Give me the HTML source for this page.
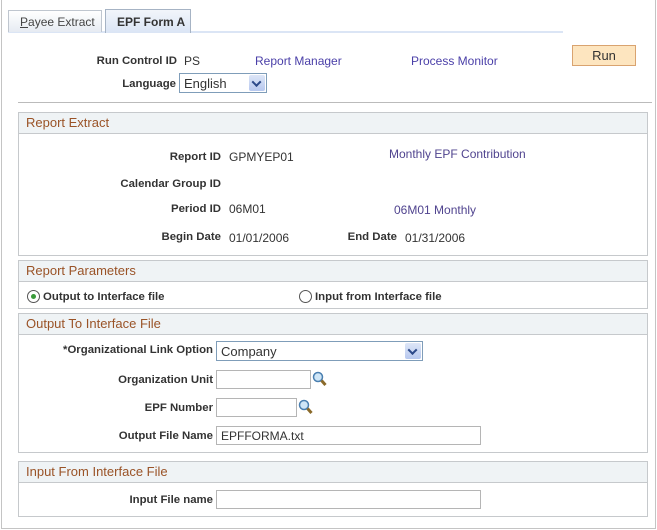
<!DOCTYPE html>
<html><head><meta charset="utf-8"><style>
*{margin:0;padding:0;box-sizing:border-box}
body{width:657px;height:530px;background:#fff;font-family:"Liberation Sans",Arial,sans-serif;font-size:12px;color:#333;position:relative;overflow:hidden}
.a{position:absolute;white-space:nowrap}
.l{font-weight:bold;text-align:right;font-size:11.4px;margin-top:1px}
.lk{color:#4a3fa8}
.sec{position:absolute;left:18px;width:630px;border:1px solid #c6c9cc}
.hd{height:21px;background:#eff3f5;border-bottom:1px solid #c6c9cc;color:#9a5327;font-size:13px;padding:2px 0 0 7px}
.in{position:absolute;height:19px;border:1px solid #b5b5b5;background:#fff;font-size:12px;padding:2px 4px}
.sel{position:absolute;height:20px;border:1px solid #7f9db9;background:#fff;padding:2px 4px;font-size:13px}
.arr{position:absolute;right:1px;top:1px;width:16px;height:16px;background:linear-gradient(#dde6f7,#b7c8ef);border-radius:2px}
.arr:after{content:"";position:absolute;left:4px;top:5px;width:5px;height:5px;border-right:2px solid #2d4a8a;border-bottom:2px solid #2d4a8a;transform:rotate(45deg) translate(-1px,-1px)}
.rad{position:absolute;width:13px;height:13px;border:1px solid #555;border-radius:50%;background:#fff}
</style></head><body>
<div class="a" style="left:1px;top:0;width:655px;height:529px;border:1px solid #c4c4c4;border-top:none"></div>
<div class="a" style="left:8px;top:31px;width:555px;height:2px;background:#dbe5f5"></div>
<div class="a" style="left:8px;top:10px;width:94px;height:22px;border:1px solid #bfc6cf;border-bottom:none;background:linear-gradient(#fff,#e6ebf2);padding:4px 0 0 11px;font-size:12px;color:#444"><u>P</u>ayee Extract</div>
<div class="a" style="left:105px;top:9px;width:86px;height:24px;border:1px solid #a6b3c4;border-bottom:none;background:linear-gradient(#f2f5fa,#dbe5f5);padding:5px 0 0 11px;font-size:12px;font-weight:bold;color:#333">EPF Form A</div>

<div class="a l" style="left:60px;width:117px;top:54px">Run Control ID</div>
<div class="a" style="left:184px;top:54px">PS</div>
<div class="a lk" style="left:255px;top:54px">Report Manager</div>
<div class="a lk" style="left:411px;top:54px">Process Monitor</div>
<div class="a" style="left:572px;top:45px;width:64px;height:21px;border:1px solid #d9a36f;background:#fde5bf;text-align:center;padding-top:2px;font-size:13px">Run</div>
<div class="a l" style="left:60px;width:116px;top:77px">Language</div>
<div class="sel" style="left:179px;top:73px;width:88px">English<div class="arr"></div></div>
<div class="a" style="left:18px;top:102px;width:634px;height:1px;background:#bbb"></div>

<div class="sec" style="top:112px;height:144px"><div class="hd">Report Extract</div></div>
<div class="a l" style="left:100px;width:121px;top:150px">Report ID</div>
<div class="a" style="left:229px;top:150px">GPMYEP01</div>
<div class="a lk" style="left:389px;top:147px;color:#50448f">Monthly EPF Contribution</div>
<div class="a l" style="left:100px;width:121px;top:177px">Calendar Group ID</div>
<div class="a l" style="left:100px;width:121px;top:202px">Period ID</div>
<div class="a" style="left:229px;top:202px">06M01</div>
<div class="a" style="left:394px;top:203px;color:#50448f">06M01 Monthly</div>
<div class="a l" style="left:100px;width:121px;top:230px">Begin Date</div>
<div class="a" style="left:229px;top:231px">01/01/2006</div>
<div class="a l" style="left:300px;width:97px;top:230px">End Date</div>
<div class="a" style="left:405px;top:231px">01/31/2006</div>

<div class="sec" style="top:260px;height:49px"><div class="hd">Report Parameters</div></div>
<div class="rad" style="left:27px;top:290px"><div style="position:absolute;left:3px;top:3px;width:5px;height:5px;border-radius:50%;background:#3a9a3a"></div></div>
<div class="a l" style="left:43px;top:290px;text-align:left">Output to Interface file</div>
<div class="rad" style="left:299px;top:290px"></div>
<div class="a l" style="left:315px;top:290px;text-align:left">Input from Interface file</div>

<div class="sec" style="top:313px;height:140px"><div class="hd">Output To Interface File</div></div>
<div class="a l" style="left:40px;width:173px;top:343px">*Organizational Link Option</div>
<div class="sel" style="left:216px;top:341px;width:207px">Company<div class="arr"></div></div>
<div class="a l" style="left:40px;width:173px;top:373px">Organization Unit</div>
<div class="in" style="left:216px;top:370px;width:95px"></div>
<svg class="a" style="left:312px;top:371px" width="15" height="16"><circle cx="6" cy="6" r="4.5" fill="#cfe6f7" stroke="#4a7fb0" stroke-width="1.5"/><line x1="9.5" y1="9.5" x2="13.5" y2="14" stroke="#8a6a2a" stroke-width="3"/></svg>
<div class="a l" style="left:40px;width:173px;top:401px">EPF Number</div>
<div class="in" style="left:216px;top:398px;width:81px"></div>
<svg class="a" style="left:298px;top:399px" width="15" height="16"><circle cx="6" cy="6" r="4.5" fill="#cfe6f7" stroke="#4a7fb0" stroke-width="1.5"/><line x1="9.5" y1="9.5" x2="13.5" y2="14" stroke="#8a6a2a" stroke-width="3"/></svg>
<div class="a l" style="left:40px;width:173px;top:429px">Output File Name</div>
<div class="in" style="left:216px;top:426px;width:265px">EPFFORMA.txt</div>

<div class="sec" style="top:461px;height:56px"><div class="hd">Input From Interface File</div></div>
<div class="a l" style="left:40px;width:173px;top:493px">Input File name</div>
<div class="in" style="left:216px;top:490px;width:265px"></div>
</body></html>
